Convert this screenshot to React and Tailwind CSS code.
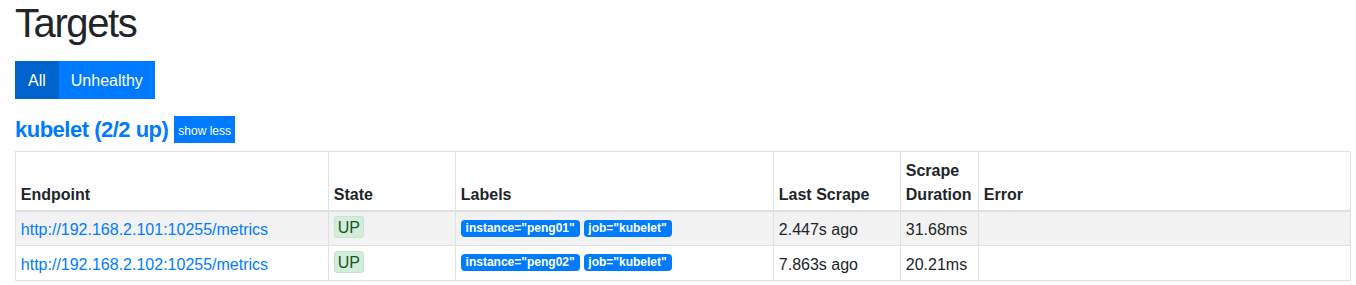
import React from 'react';

const targets = [
  { endpoint: 'http://192.168.2.101:10255/metrics', instance: 'peng01', last: '2.447s ago', duration: '31.68ms' },
  { endpoint: 'http://192.168.2.102:10255/metrics', instance: 'peng02', last: '7.863s ago', duration: '20.21ms' },
];

const font = { fontFamily: '"Liberation Sans", Arial, sans-serif' };

const App = () => {
  return (
    <div className="px-[15px] text-[#212529] bg-white min-h-[285px]" style={font}>
      <h1 className="text-[40px] leading-[46px] font-normal tracking-[-1.4px] mb-[15px]">Targets</h1>

      {/* filter buttons */}
      <div className="flex">
        <button className="bg-[#0062cc] text-white text-[16px] leading-[24px] pt-[8px] pb-[6px] px-[13px]">All</button>
        <button className="bg-[#007bff] text-white text-[16px] leading-[24px] pt-[8px] pb-[6px] px-[12px]">Unhealthy</button>
      </div>

      {/* job header */}
      <div className="flex items-center gap-[6px] mt-[17px] mb-[8px] h-[27px]">
        <h2 className="text-[22px] leading-[25px] font-bold tracking-[-0.5px] text-[#007bff]">kubelet (2/2 up)</h2>
        <button className="bg-[#007bff] text-white text-[12px] leading-[18px] pt-[5.5px] pb-[3.5px] px-[4px]">show less</button>
      </div>

      <table className="w-[1336px] table-fixed border-collapse text-[16px] leading-[24px]">
        <thead>
          <tr className="text-left align-bottom">
            <th className="w-[313px] border border-[#dee2e6] border-b-2 px-[4.8px] pt-[6.8px] pb-[2.8px] font-bold">Endpoint</th>
            <th className="w-[127px] border border-[#dee2e6] border-b-2 px-[4.8px] pt-[6.8px] pb-[2.8px] font-bold">State</th>
            <th className="w-[318px] border border-[#dee2e6] border-b-2 px-[4.8px] pt-[6.8px] pb-[2.8px] font-bold">Labels</th>
            <th className="w-[127px] border border-[#dee2e6] border-b-2 px-[4.8px] pt-[6.8px] pb-[2.8px] font-bold">Last Scrape</th>
            <th className="w-[78px] border border-[#dee2e6] border-b-2 px-[4.8px] pt-[6.8px] pb-[2.8px] font-bold">Scrape Duration</th>
            <th className="border border-[#dee2e6] border-b-2 px-[4.8px] pt-[6.8px] pb-[2.8px] font-bold">Error</th>
          </tr>
        </thead>
        <tbody>
          {targets.map((t, i) => (
            <tr key={t.endpoint} className={i % 2 === 0 ? 'bg-[#f2f2f2] align-top' : 'bg-white align-top'}>
              <td className="border border-[#dee2e6] px-[4.8px] pt-[6.8px] pb-[2.8px]">
                <a className="text-[#007bff]">{t.endpoint}</a>
              </td>
              <td className="border border-[#dee2e6] px-[4.8px] pt-[4.8px] pb-[4.8px]">
                <span className="inline-block align-top bg-[#d4edda] border border-[#c3e6cb] text-[#155724] rounded-[3px] px-[3px] pt-[2px] leading-[18px]">UP</span>
              </td>
              <td className="border border-[#dee2e6] px-[4.8px] pt-[4.8px] pb-[4.8px]">
                <div className="flex items-center gap-[4px] h-[24px]">
                  <span className="bg-[#007bff] text-white text-[12px] leading-[17px] font-bold rounded-[4px] px-[4.8px]">instance="{t.instance}"</span>
                  <span className="bg-[#007bff] text-white text-[12px] leading-[17px] font-bold rounded-[4px] px-[4.8px]">job="kubelet"</span>
                </div>
              </td>
              <td className="border border-[#dee2e6] px-[4.8px] pt-[6.8px] pb-[2.8px]">{t.last}</td>
              <td className="border border-[#dee2e6] px-[4.8px] pt-[6.8px] pb-[2.8px]">{t.duration}</td>
              <td className="border border-[#dee2e6] px-[4.8px] pt-[6.8px] pb-[2.8px]"></td>
            </tr>
          ))}
        </tbody>
      </table>
    </div>
  );
};

export default App;
